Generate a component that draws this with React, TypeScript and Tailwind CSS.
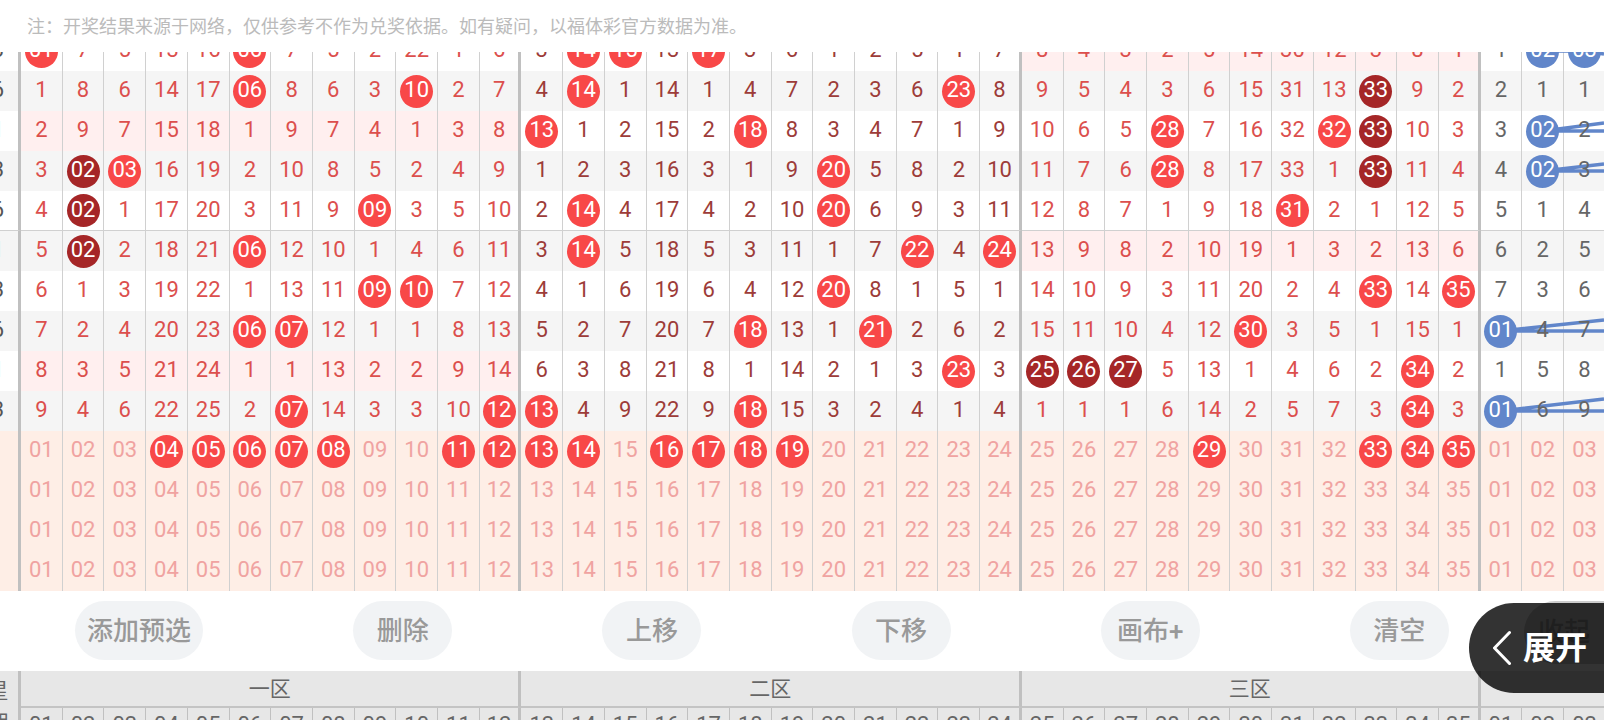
import React from "react";
import clsx from "clsx";

type Zone = {
  name: string;
  start: number;
  count: number;
  text: string;
};

const zones: Zone[] = [
  { name: "一区", start: 1, count: 12, text: "text-[#dc4f4d]" },
  { name: "二区", start: 13, count: 12, text: "text-[#9d3c39]" },
  { name: "三区", start: 25, count: 11, text: "text-[#dc4f4d]" },
  { name: "", start: 1, count: 3, text: "text-[#666666]" },
];

type Draw = {
  week: string;
  // one string for each zone; r = red ball, d = dark (repeated) ball, b = blue ball
  cells: string[];
  emptyZone?: number;
  divider?: boolean;
};

const draws: Draw[] = [
  { week: "3", emptyZone: 2, cells: ["r01 7 5 13 16 r06 7 5 2 22 1 6", "3 r14 r15 13 r17 3 6 1 2 5 1 7", "8 4 3 2 5 14 30 12 3 8 1", "1 b02 b03"] },
  { week: "6", cells: ["1 8 6 14 17 r06 8 6 3 r10 2 7", "4 r14 1 14 1 4 7 2 3 6 r23 8", "9 5 4 3 6 15 31 13 d33 9 2", "2 1 1"] },
  { week: "1", emptyZone: 0, cells: ["2 9 7 15 18 1 9 7 4 1 3 8", "r13 1 2 15 2 r18 8 3 4 7 1 9", "10 6 5 r28 7 16 32 r32 d33 10 3", "3 b02 2"] },
  { week: "3", cells: ["3 d02 r03 16 19 2 10 8 5 2 4 9", "1 2 3 16 3 1 9 r20 5 8 2 10", "11 7 6 r28 8 17 33 1 d33 11 4", "4 b02 3"] },
  { week: "6", divider: true, cells: ["4 d02 1 17 20 3 11 9 r09 3 5 10", "2 r14 4 17 4 2 10 r20 6 9 3 11", "12 8 7 1 9 18 r31 2 1 12 5", "5 1 4"] },
  { week: "1", emptyZone: 2, cells: ["5 d02 2 18 21 r06 12 10 1 4 6 11", "3 r14 5 18 5 3 11 1 7 r22 4 r24", "13 9 8 2 10 19 1 3 2 13 6", "6 2 5"] },
  { week: "3", cells: ["6 1 3 19 22 1 13 11 r09 r10 7 12", "4 1 6 19 6 4 12 r20 8 1 5 1", "14 10 9 3 11 20 2 4 r33 14 r35", "7 3 6"] },
  { week: "6", cells: ["7 2 4 20 23 r06 r07 12 1 1 8 13", "5 2 7 20 7 r18 13 1 r21 2 6 2", "15 11 10 4 12 r30 3 5 1 15 1", "b01 4 7"] },
  { week: "1", emptyZone: 0, cells: ["8 3 5 21 24 1 1 13 2 2 9 14", "6 3 8 21 8 1 14 2 1 3 r23 3", "d25 d26 d27 5 13 1 4 6 2 r34 2", "1 5 8"] },
  { week: "3", cells: ["9 4 6 22 25 2 r07 14 3 3 10 r12", "r13 4 9 22 9 r18 15 3 2 4 1 4", "1 1 1 6 14 2 5 7 3 r34 3", "b01 6 9"] },
];

const picked = [[4, 5, 6, 7, 8, 11, 12, 13, 14, 16, 17, 18, 19, 29, 33, 34, 35], [], [], []];

const actions = ["添加预选", "删除", "上移", "下移", "画布+", "清空"];

const pad = (n: number) => String(n).padStart(2, "0");

const numbersOf = (zone: Zone) => Array.from({ length: zone.count }, (_, i) => zone.start + i);

const edge = (last: boolean) =>
  last ? "border-r-[3px] border-r-[#c0c0c0]" : "border-r border-r-[#d0d0d0]";

const ballColors: Record<string, string> = {
  r: "bg-[#f84848]",
  d: "bg-[#a52627]",
  b: "bg-[#6186ca]",
};

const Ball = ({ kind, children }: { kind: string; children: React.ReactNode }) => (
  <span
    className={clsx(
      "relative mx-auto flex size-[33px] items-center justify-center rounded-full pb-0.5 text-white",
      ballColors[kind]
    )}
  >
    {children}
  </span>
);

const Columns = () => (
  <colgroup>
    <col className="w-[43px]" />
    {zones.map((zone, z) => numbersOf(zone).map((n) => <col key={`${z}-${n}`} />))}
  </colgroup>
);

const tableClass =
  "-ml-[22px] w-[calc(100%+24px)] table-fixed border-separate border-spacing-0 text-center text-[22px] leading-8";

const DrawRow = ({ draw, index }: { draw: Draw; index: number }) => {
  const stripe = index % 2 === 1 ? "bg-[#f5f5f5]" : "bg-white";
  const line = draw.divider && "border-b border-b-[#d0d0d0]";
  return (
    <tr>
      <td className={clsx("h-10 p-0 pb-0.5 text-[#555555]", stripe, line, edge(true))}>{draw.week}</td>
      {zones.map((zone, z) => {
        const cells = draw.cells[z].split(" ");
        return cells.map((cell, i) => {
          const ball = /^[rdb]/.test(cell);
          return (
            <td
              key={`${z}-${i}`}
              className={clsx(
                "h-10 p-0",
                !ball && "pb-0.5",
                draw.emptyZone === z ? "bg-[#ffefef]" : stripe,
                zone.text,
                line,
                edge(z < 3 && i === cells.length - 1)
              )}
            >
              {ball ? <Ball kind={cell[0]}>{cell.slice(1)}</Ball> : <span className="relative">{cell}</span>}
            </td>
          );
        });
      })}
    </tr>
  );
};

const PickRow = ({ selected }: { selected: number[] }) => (
  <tr className="bg-[#feeee6] text-[#f0a3a1]">
    <td className={clsx("h-10 p-0", edge(true))}></td>
    {zones.map((zone, z) =>
      numbersOf(zone).map((n, i) => {
        const ball = z < 3 && selected.includes(n);
        return (
          <td
            key={`${z}-${n}`}
            className={clsx("h-10 p-0", !ball && "pb-0.5", edge(z < 3 && i === zone.count - 1))}
          >
            {ball ? <Ball kind="r">{pad(n)}</Ball> : pad(n)}
          </td>
        );
      })
    )}
  </tr>
);

// links between the blue balls, they continue past the right side
const BlueLinks = () => (
  <svg
    className="absolute top-0 right-0 h-[400px] w-[123px]"
    viewBox="0 0 123 400"
    fill="none"
    stroke="#6186ca"
    strokeWidth="3.5"
  >
    <path d="M62 20H103L123 23" />
    <path d="M123 92L62 100H123" />
    <path d="M123 133L62 140H123" />
    <path d="M123 289L20 300H123" />
    <path d="M123 368L20 380H123" />
  </svg>
);

const Chart = () => (
  <div className="shrink-0 overflow-hidden">
    <div className="relative -mt-[21px]">
      {/* before the table, so that balls and numbers paint over the links */}
      <BlueLinks />
      <table className={tableClass}>
        <Columns />
        <tbody>
          {draws.map((draw, i) => (
            <DrawRow key={i} draw={draw} index={i} />
          ))}
          {picked.map((selected, i) => (
            <PickRow key={i} selected={selected} />
          ))}
        </tbody>
      </table>
    </div>
  </div>
);

const Toolbar = () => (
  <div className="flex h-20 shrink-0 items-start bg-white pt-[10px] text-[26px] font-medium text-[#999999]">
    <div className="flex flex-1 justify-around">
      {actions.map((label) => (
        <button
          key={label}
          type="button"
          className="h-[59px] min-w-[99px] rounded-full bg-[#f1f3f5] px-3 pt-0.5 whitespace-nowrap"
        >
          {label}
        </button>
      ))}
    </div>
    <button type="button" className="h-[63px] w-20 rounded-l-full bg-[#cccccc]">
      收起
    </button>
  </div>
);

const ChartHead = () => (
  <div className="shrink-0 overflow-hidden">
    <table className={tableClass}>
      <Columns />
      <thead className="bg-[#e7e7e7] text-[#666666]">
        <tr>
          <th rowSpan={2} className={clsx("p-0 text-[21px] leading-8 font-normal", edge(true))}>
            星<br />期
          </th>
          {zones.map((zone, z) => (
            <th
              key={z}
              colSpan={zone.count}
              className={clsx("h-[37px] border-b-2 border-b-[#c4c4c4] p-0 text-[21px] font-normal", edge(z < 3))}
            >
              {zone.name}
            </th>
          ))}
        </tr>
        <tr>
          {zones.map((zone, z) =>
            numbersOf(zone).map((n, i) => (
              <th
                key={`${z}-${n}`}
                className={clsx(
                  "h-[34px] p-0 font-normal",
                  z < 3 && i === zone.count - 1
                    ? "border-r-[3px] border-r-[#c0c0c0]"
                    : "border-r border-r-[#c0c0c0]"
                )}
              >
                {pad(n)}
              </th>
            ))
          )}
        </tr>
      </thead>
    </table>
  </div>
);

const App = () => {
  return (
    <div className="relative flex h-screen flex-col overflow-hidden bg-white font-['Roboto','Noto_Sans_CJK_SC',sans-serif]">
      <p className="flex h-[52px] shrink-0 items-center pt-0.5 pl-[27px] text-lg text-[#bbbbbb]">
        注：开奖结果来源于网络，仅供参考不作为兑奖依据。如有疑问，以福体彩官方数据为准。
      </p>
      <Chart />
      <Toolbar />
      <ChartHead />
      <button
        type="button"
        className="absolute right-0 bottom-[27px] flex h-[90px] items-center gap-3 rounded-l-full bg-black/80 pr-[17px] pl-6 text-[32px] font-bold text-white"
      >
        <svg className="h-9 w-[18px]" viewBox="0 0 18 36" fill="none" stroke="currentColor" strokeWidth="3" strokeLinecap="round" strokeLinejoin="round">
          <path d="M16.5 2.5L1.5 18L16.5 33.5" />
        </svg>
        展开
      </button>
    </div>
  );
};

export default App;
